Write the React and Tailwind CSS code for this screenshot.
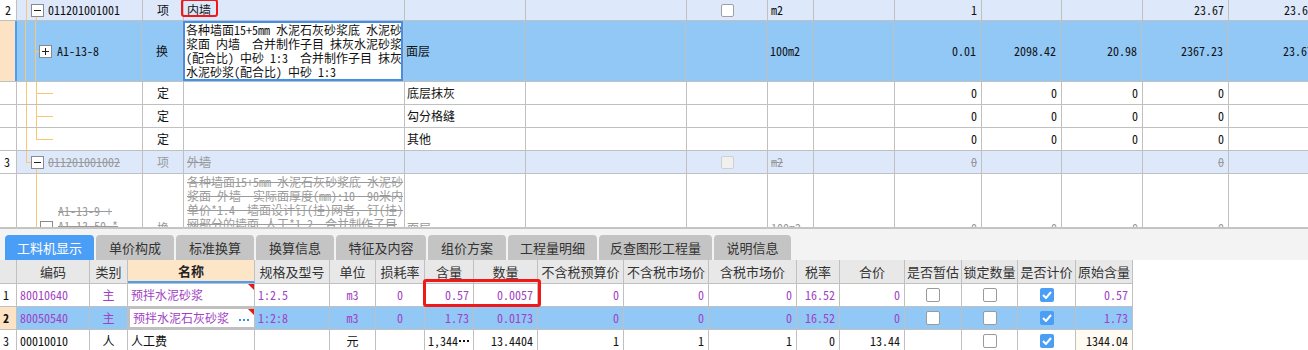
import React from "react";

const FONT = "[font-family:'Noto_Sans_Mono_CJK_SC','Noto_Sans_CJK_SC','Liberation_Mono',monospace]";
const LINE = "bg-[#fbc674]";

function MinusBox({ className = "" }) {
  return (
    <span className={`absolute w-[13px] h-[13px] border border-[#8a8a8a] bg-white flex items-center justify-center ${className}`}>
      <span className="w-[7px] h-px bg-[#222]" />
    </span>
  );
}
function PlusBox({ className = "" }) {
  return (
    <span className={`absolute w-[13px] h-[13px] border border-[#8a8a8a] bg-white flex items-center justify-center ${className}`}>
      <span className="relative w-[7px] h-[7px] flex items-center justify-center">
        <span className="absolute w-[7px] h-px bg-[#222]" />
        <span className="absolute h-[7px] w-px bg-[#222]" />
      </span>
    </span>
  );
}

function Dots({ color }) {
  return (
    <span className="flex gap-[2px] items-center">
      <span className={`w-[2px] h-[2px] ${color}`} />
      <span className={`w-[2px] h-[2px] ${color}`} />
      <span className={`w-[2px] h-[2px] ${color}`} />
    </span>
  );
}

function UCell({ w, className = "", children }) {
  return (
    <div className={`${w} shrink-0 h-full border-r border-[#c0c0c0] flex items-center ${className}`}>
      {children}
    </div>
  );
}

const GRAY = "text-[#9a9a9a] line-through";

function UpperTable() {
  return (
    <div className="h-[227px] overflow-hidden bg-white">
      {/* Row 2 */}
      <div className="flex h-[21px] border-b border-[#c0c0c0]">
        <UCell w="w-[17px]" className="pl-[5px] bg-white">2</UCell>
        <div className="flex flex-1 bg-[#dde9fb] h-full">
          <UCell w="w-[126px]" className="relative pl-[31px]">
            <span className={`absolute left-[9px] top-0 bottom-0 w-px ${LINE}`} />
            <span className={`absolute left-[19px] top-[16px] bottom-0 w-px ${LINE}`} />
            <MinusBox className="left-[14px] top-[4px]" />
            <span>011201001001</span>
          </UCell>
          <UCell w="w-[41px]" className="justify-center">项</UCell>
          <UCell w="w-[221px]" className="relative pl-[3px]">
            <span className="absolute left-[-3px] top-[-1px] w-[37px] h-[18px] border-2 border-[#f01818] rounded-[3px]" />
            <span>内墙</span>
          </UCell>
          <UCell w="w-[121px]" />
          <UCell w="w-[161px]" />
          <UCell w="w-[81px]" className="justify-center">
            <span className="w-[13px] h-[13px] border border-[#a0a0a0] rounded-[2px] bg-white" />
          </UCell>
          <UCell w="w-[46px]" className="pl-[3px]">m2</UCell>
          <UCell w="w-[81px]" />
          <UCell w="w-[87px]" className="justify-end pr-[4px]">1</UCell>
          <UCell w="w-[80px]" />
          <UCell w="w-[81px]" />
          <UCell w="w-[86px]" className="justify-end pr-[4px]">23.67</UCell>
          <UCell w="w-[90px]" className="justify-end pr-[4px]">23.67</UCell>
        </div>
      </div>

      {/* Row A1-13-8 selected */}
      <div className="flex h-[61px] border-b border-[#c0c0c0]">
        <div className="w-[17px] shrink-0 h-full bg-[#fde3c3] border-r-2 border-[#4a9ef5]" />
        <div className="flex flex-1 bg-[#91c8f6] h-full">
          <UCell w="w-[125px]" className="relative pl-[40px]">
            <span className={`absolute left-[8px] top-0 bottom-0 w-px ${LINE}`} />
            <span className={`absolute left-[18px] top-0 bottom-0 w-px ${LINE}`} />
            <span className={`absolute left-[18px] top-[30px] w-[5px] h-px ${LINE}`} />
            <PlusBox className="left-[22px] top-[24px]" />
            <span>A1-13-8</span>
          </UCell>
          <UCell w="w-[41px]" className="justify-center">换</UCell>
          <UCell w="w-[221px]">
            <div className="w-full h-full bg-white border-2 border-[#3d8ff0] pl-[1px] leading-[14px] whitespace-pre overflow-hidden">
              <div>各种墙面15+5mm 水泥石灰砂浆底 水泥砂</div>
              <div>浆面 内墙  合并制作子目 抹灰水泥砂浆</div>
              <div>(配合比) 中砂 1:3  合并制作子目 抹灰</div>
              <div>水泥砂浆(配合比) 中砂 1:3</div>
            </div>
          </UCell>
          <UCell w="w-[121px]" className="pl-[2px]">面层</UCell>
          <UCell w="w-[161px]" />
          <UCell w="w-[81px]" />
          <UCell w="w-[46px]" className="pl-[3px]">100m2</UCell>
          <UCell w="w-[81px]" />
          <UCell w="w-[87px]" className="justify-end pr-[4px]">0.01</UCell>
          <UCell w="w-[80px]" className="justify-end pr-[4px]">2098.42</UCell>
          <UCell w="w-[81px]" className="justify-end pr-[4px]">20.98</UCell>
          <UCell w="w-[86px]" className="justify-end pr-[4px]">2367.23</UCell>
          <UCell w="w-[90px]" className="justify-end pr-[4px]">23.67</UCell>
        </div>
      </div>

      {/* 定 rows */}
      {[
        ["底层抹灰", false],
        ["勾分格缝", false],
        ["其他", true],
      ].map(([name, last]) => (
        <div key={name} className="flex h-[23px] border-b border-[#c0c0c0]">
          <UCell w="w-[17px]" />
          <UCell w="w-[126px]" className="relative">
            <span className={`absolute left-[9px] top-0 bottom-0 w-px ${LINE}`} />
            {last ? (
              <span className={`absolute left-[19px] top-0 h-[11px] w-px ${LINE}`} />
            ) : (
              <span className={`absolute left-[19px] top-0 bottom-0 w-px ${LINE}`} />
            )}
            <span className={`absolute left-[19px] top-[11px] w-[17px] h-px ${LINE}`} />
          </UCell>
          <UCell w="w-[41px]" className="justify-center">定</UCell>
          <UCell w="w-[221px]" />
          <UCell w="w-[121px]" className="pl-[2px]">{name}</UCell>
          <UCell w="w-[161px]" />
          <UCell w="w-[81px]" />
          <UCell w="w-[46px]" />
          <UCell w="w-[81px]" />
          <UCell w="w-[87px]" className="justify-end pr-[4px]">0</UCell>
          <UCell w="w-[80px]" className="justify-end pr-[4px]">0</UCell>
          <UCell w="w-[81px]" className="justify-end pr-[4px]">0</UCell>
          <UCell w="w-[86px]" className="justify-end pr-[4px]">0</UCell>
          <UCell w="w-[90px]" className="justify-end pr-[4px]">0</UCell>
        </div>
      ))}

      {/* Row 3 */}
      <div className="flex h-[23px] border-b border-[#c0c0c0]">
        <UCell w="w-[17px]" className="pl-[4px] bg-white">3</UCell>
        <div className="flex flex-1 bg-[#dde9fb] h-full">
          <UCell w="w-[126px]" className="relative pl-[31px]">
            <span className={`absolute left-[9px] top-0 h-[11px] w-px ${LINE}`} />
            <span className={`absolute left-[9px] top-[11px] w-[5px] h-px ${LINE}`} />
            <span className={`absolute left-[19px] top-[17px] bottom-0 w-px ${LINE}`} />
            <MinusBox className="left-[14px] top-[5px]" />
            <span className={GRAY}>011201001002</span>
          </UCell>
          <UCell w="w-[41px]" className="justify-center text-[#9a9a9a]">项</UCell>
          <UCell w="w-[221px]" className="pl-[3px]"><span className={GRAY}>外墙</span></UCell>
          <UCell w="w-[121px]" />
          <UCell w="w-[161px]" />
          <UCell w="w-[81px]" className="justify-center">
            <span className="w-[13px] h-[13px] border border-[#d0d0d0] rounded-[2px] bg-[#f0f0f0]" />
          </UCell>
          <UCell w="w-[46px]" className="pl-[3px]"><span className={GRAY}>m2</span></UCell>
          <UCell w="w-[81px]" />
          <UCell w="w-[87px]" className="justify-end pr-[4px]"><span className={GRAY}>0</span></UCell>
          <UCell w="w-[80px]" />
          <UCell w="w-[81px]" />
          <UCell w="w-[86px]" className="justify-end pr-[4px]"><span className={GRAY}>0</span></UCell>
          <UCell w="w-[90px]" className="justify-end pr-[4px]"><span className={GRAY}>0</span></UCell>
        </div>
      </div>

      {/* Row A1-13-9 (clipped by the lower panel) */}
      <div className="flex h-[108px] border-b border-[#c0c0c0]">
        <UCell w="w-[17px]" />
        <UCell w="w-[126px]" className="relative pl-[41px] items-start">
          <span className={`absolute left-[19px] top-0 h-[53px] w-px ${LINE}`} />
          <span className={`absolute left-[19px] top-[53px] w-[4px] h-px ${LINE}`} />
          <MinusBox className="left-[23px] top-[47px]" />
          <div className="mt-[29px] leading-[15px] text-[#9a9a9a]">
            <div className="line-through whitespace-pre">A1-13-9 +</div>
            <div className="line-through whitespace-pre">A1-13-50 *</div>
          </div>
        </UCell>
        <UCell w="w-[41px]" className="justify-center text-[#9a9a9a]">换</UCell>
        <UCell w="w-[221px]" className="items-start">
          <div className="pl-[3px] pt-[1px] leading-[14px] whitespace-pre text-[#9a9a9a] overflow-hidden">
            <div className="line-through">各种墙面15+5mm 水泥石灰砂浆底 水泥砂</div>
            <div className="line-through">浆面 外墙  实际面厚度(mm):10  90米内</div>
            <div className="line-through">单价*1.4  墙面设计钉(挂)网者，钉(挂)</div>
            <div className="line-through">网部分的墙面 人工*1.2  合并制作子目</div>
          </div>
        </UCell>
        <UCell w="w-[121px]" className="pl-[2px]"><span className={GRAY}>面层</span></UCell>
        <UCell w="w-[161px]" />
        <UCell w="w-[81px]" />
        <UCell w="w-[46px]" className="pl-[3px]"><span className={GRAY}>100m2</span></UCell>
        <UCell w="w-[81px]" />
        <UCell w="w-[87px]" className="justify-end pr-[4px]"><span className={GRAY}>0</span></UCell>
        <UCell w="w-[80px]" className="justify-end pr-[4px]"><span className={GRAY}>0</span></UCell>
        <UCell w="w-[81px]" className="justify-end pr-[4px]"><span className={GRAY}>0</span></UCell>
        <UCell w="w-[86px]" className="justify-end pr-[4px]"><span className={GRAY}>0</span></UCell>
        <UCell w="w-[90px]" className="justify-end pr-[4px]"><span className={GRAY}>0</span></UCell>
      </div>
    </div>
  );
}

const TABS = [
  ["工料机显示", "w-[89px]"],
  ["单价构成", "w-[78px]"],
  ["标准换算", "w-[78px]"],
  ["换算信息", "w-[78px]"],
  ["特征及内容", "w-[90px]"],
  ["组价方案", "w-[78px]"],
  ["工程量明细", "w-[89px]"],
  ["反查图形工程量", "w-[113px]"],
  ["说明信息", "w-[77px]"],
];

const LW = ["w-[17px]", "w-[73px]", "w-[38px]", "w-[127px]", "w-[75px]", "w-[46px]", "w-[49px]", "w-[49px]", "w-[64px]", "w-[86px]", "w-[85px]", "w-[88px]", "w-[43px]", "w-[65px]", "w-[57px]", "w-[56px]", "w-[58px]", "w-[57px]"];
const HEAD = ["", "编码", "类别", "名称", "规格及型号", "单位", "损耗率", "含量", "数量", "不含税预算价", "不含税市场价", "含税市场价", "税率", "合价", "是否暂估", "锁定数量", "是否计价", "原始含量"];
const ALIGN = ["l", "l", "c", "l", "l", "c", "c", "r", "r", "r", "r", "r", "r", "r", "c", "c", "c", "r"];
const AL = { l: "justify-start pl-[3px]", c: "justify-center", r: "justify-end pr-[4px]" };

function CB({ checked }) {
  if (checked)
    return (
      <span className="w-[14px] h-[14px] rounded-[2px] bg-[#4a9ff5] flex items-center justify-center">
        <svg width="10" height="8" viewBox="0 0 10 8">
          <path d="M1 4 L4 7 L9 1" stroke="white" strokeWidth="2" fill="none" />
        </svg>
      </span>
    );
  return <span className="w-[14px] h-[14px] rounded-[2px] border border-[#9a9a9a] bg-white" />;
}

const ROWS = [
  { n: "1", purple: true, cells: ["80010640", "主", "预拌水泥砂浆", "1:2.5", "m3", "0", "0.57", "0.0057", "0", "0", "0", "16.52", "0", "u", "u", "c", "0.57"] },
  { n: "2", purple: true, sel: true, cells: ["80050540", "主", "预拌水泥石灰砂浆", "1:2:8", "m3", "0", "1.73", "0.0173", "0", "0", "0", "16.52", "0", "u", "u", "c", "1.73"] },
  { n: "3", purple: false, cells: ["00010010", "人", "人工费", "", "元", "", "1,344", "13.4404", "1", "1", "1", "0", "13.44", "", "u", "c", "1344.04"] },
];

function LowerPanel() {
  return (
    <div className="border-t-2 border-[#c4c4c4]">
      <div className="bg-[#f3f3f3] pt-[6px] pl-[5px] flex gap-[2px] h-[31px]">
        {TABS.map(([t, w], i) => (
          <div
            key={t}
            className={`${w} h-[25px] rounded-t-[4px] flex items-center justify-center text-[13px] leading-none ${
              i === 0 ? "bg-[#4b9ef5] text-white" : "bg-[#c4c4c4] text-[#333]"
            }`}
          >
            {t}
          </div>
        ))}
      </div>
      <div className="relative bg-white">
        <div className="w-[1133px]">
          <div className="flex h-[24px] bg-[#e8e8e8] border-b border-[#c0c0c0] text-[13px] leading-none text-[#333]">
            {HEAD.map((h, i) => (
              <div
                key={i}
                className={`${LW[i]} shrink-0 h-full border-r border-[#c0c0c0] flex items-center justify-center ${
                  i === 3 ? "bg-[#fde5c8] font-bold border-b-2 border-b-[#4a9ef5] text-[#222]" : ""
                }`}
              >
                {h}
              </div>
            ))}
          </div>
          {ROWS.map((r) => (
            <div key={r.n} className={`flex h-[23px] border-b border-[#c0c0c0] ${r.sel ? "bg-[#91c8f6]" : "bg-white"}`}>
              <div className={`${LW[0]} shrink-0 h-full border-r border-[#c0c0c0] flex items-center pl-[3px] ${r.sel ? "bg-[#fde3c3] font-bold" : "bg-white"}`}>
                {r.n}
              </div>
              {r.cells.map((c, j) => {
                const i = j + 1;
                const color = r.purple ? "text-[#a23fc4]" : "text-[#111]";
                let content = c;
                if (c === "u") content = <CB />;
                if (c === "c") content = <CB checked />;
                if (c === "1,344")
                  content = (
                    <span className="flex items-center gap-[1px]">
                      <span>1,344</span>
                      <Dots color="bg-[#111]" />
                    </span>
                  );
                if (i === 3) {
                  return (
                    <div
                      key={i}
                      className={`${LW[i]} shrink-0 h-full border-r border-[#c0c0c0] relative flex items-center pl-[3px] ${color} ${
                        r.sel ? "bg-white border-2 border-[#6e6e6e]" : ""
                      }`}
                    >
                      {content}
                      {r.purple && (
                        <span className="absolute top-0 right-0 w-0 h-0 border-t-[6px] border-l-[6px] border-t-[#e81818] border-l-transparent" />
                      )}
                      {r.sel && (
                        <span className="absolute right-[5px] top-[10px]">
                          <Dots color="bg-[#3b8fe0]" />
                        </span>
                      )}
                    </div>
                  );
                }
                return (
                  <div
                    key={i}
                    className={`${LW[i]} shrink-0 h-full border-r border-[#c0c0c0] flex items-center ${AL[ALIGN[i]]} ${color} ${
                      i === 17 && !r.purple ? "bg-[#fffaf2]" : ""
                    }`}
                  >
                    {content}
                  </div>
                );
              })}
            </div>
          ))}
        </div>
        <span className="absolute left-[423px] top-[19px] w-[118px] h-[28px] border-[3px] border-[#f01818] rounded-[3px]" />
      </div>
    </div>
  );
}

export default function App() {
  return (
    <div className={`w-[1308px] h-[350px] overflow-hidden bg-white text-[12px] text-[#111] ${FONT}`}>
      <UpperTable />
      <LowerPanel />
    </div>
  );
}
